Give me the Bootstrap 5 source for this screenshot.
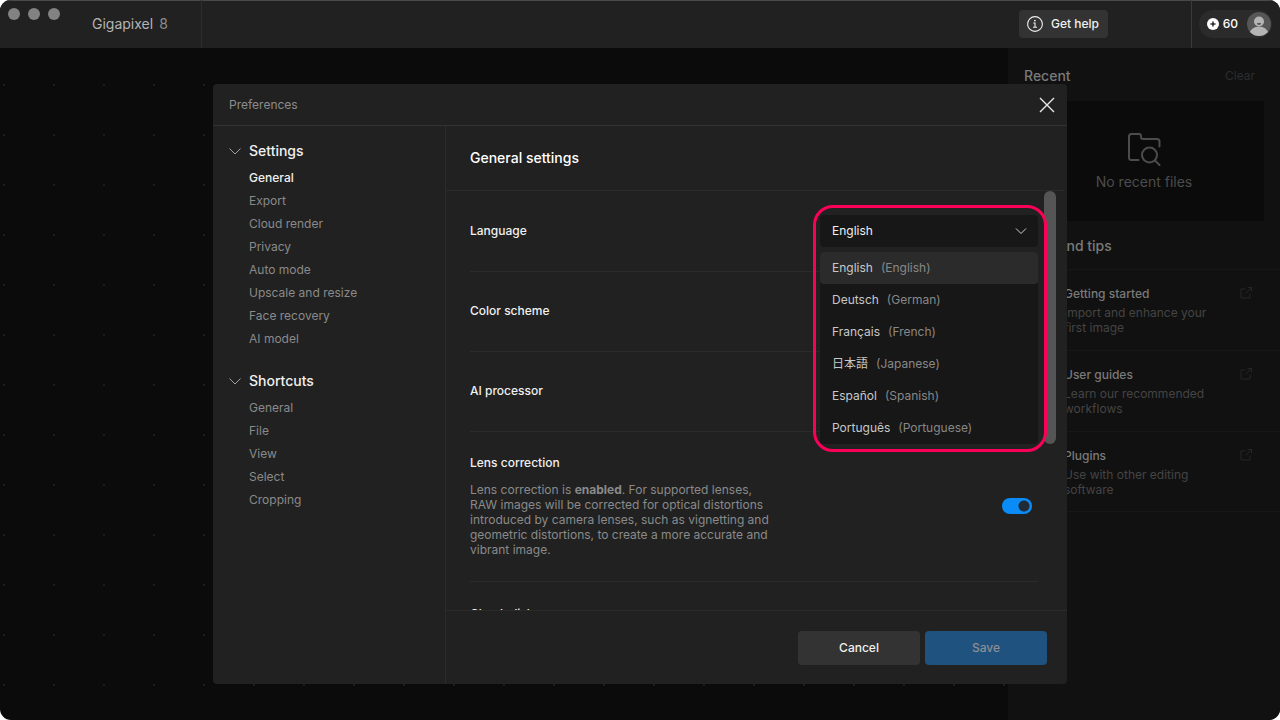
<!DOCTYPE html>
<html lang="en" data-bs-theme="dark">
<head>
<meta charset="utf-8">
<meta name="viewport" content="width=device-width, initial-scale=1">
<title>Gigapixel 8 – Preferences</title>
<link rel="stylesheet" href="https://cdn.jsdelivr.net/npm/bootstrap@5.3.0/dist/css/bootstrap.min.css">
<style>
  html { background: #fff; }
  body { background: #fff; font-family: Inter, "Noto Sans CJK JP", sans-serif; font-size: 12px; line-height: 18px; color: #f0f0f0; }
  a { text-decoration: none; color: inherit; }
  svg { display: block; flex: none; }
  .fs-14 { font-size: 14px; }
  .app-window { background: #0b0b0b; border-radius: 11px; }

  .titlebar { height: 48px; background: #212121; box-shadow: inset 0 1px #4a4a4a; }
  .brand-area { width: 202px; border-right: 1px solid #2e2e2e; }
  .lights { top: 8px; left: 8px; gap: 8px; }
  .lights span { width: 12px; height: 12px; border-radius: 50%; background: #828282; }
  .brand-name { padding-left: 92px; gap: 6px; color: #b4b4b4; }
  .brand-name span { color: #8c8c8c; }
  .help-btn { height: 28px; padding: 0 9px 0 8px; gap: 8px; margin-right: 83px; background: #333; border: 0; border-radius: 4px; color: #f0f0f0; font-weight: 500; }
  .account-area { width: 89px; padding-right: 8px; border-left: 1px solid #3a3a3a; }
  .account-btn { height: 28px; padding: 0 1px 0 8px; background: #2b2b2b; border: 0; border-radius: 14px; color: #fff; font-weight: 500; }
  .credits { margin: 0 9px 0 4px; }

  .canvas-area { background-image: radial-gradient(circle at 4px 37px, #242424 0, #191919 1px, transparent 1px); background-size: 50px 50px; }
  .side-panel { width: 272px; background: #111; padding: 18px 0 0 16px; }
  .side-panel h2 { font-size: 14px; line-height: 20px; margin: 0; color: #7a7a7a; font-weight: 500; }
  .clear-btn { border: 0; background: none; padding: 0; margin-right: 25px; color: #2d2d2d; }
  .empty-box { height: 120px; margin: 15px 16px 0 0; background: #0b0b0b; color: #4c4c4c; gap: 7px; }
  .tips-title { padding: 15px 0 13px; }
  .side-panel .tips-title { line-height: 20px; }
  .tip-item { min-height: 81px; border-top: 1px solid #171717; padding: 15px 28px 0 40px; color: #7a7a7a; font-weight: 500; }
  .tip-item:last-child { border-bottom: 1px solid #171717; }
  .tip-item p { margin: 2px 0 0; line-height: 15px; color: #444; font-weight: 400; }
  .tip-item svg { color: #262626; margin-top: 2px; }

  .overlay { inset: 0; }
  .prefs { width: 854px; max-width: 100%; height: calc(100% - 72px); background: #212121; border-radius: 4px; }
  .prefs-head { height: 42px; padding: 0 12px 0 16px; border-bottom: 1px solid #333; color: #8c8c8c; }
  .prefs-nav { width: 233px; border-right: 1px solid #2b2b2b; padding: 14px 16px; }
  .nav-head { border: 0; background: none; padding: 0; gap: 8px; height: 22px; font-size: 14px; font-weight: 500; color: #f0f0f0; }
  .nav-head svg { color: #a0a0a0; }
  .nav-links { margin: 4px 0 20px 20px; padding: 0; list-style: none; color: #8a8a8a; }
  .nav-links li { line-height: 23px; }
  .nav-links .current { color: #f0f0f0; font-weight: 500; }
  .pane-title { height: 65px; margin-right: 3px; padding-left: 24px; border-bottom: 1px solid #2b2b2b; }
  .pane-title h1 { font-size: 14px; font-weight: 500; margin: 0; }
  .pane-body { min-height: 0; padding: 1px 29px 0 24px; }
  .setting { height: 80px; padding-bottom: 2px; border-bottom: 1px solid #2b2b2b; flex: none; font-weight: 500; }
  .setting.tall { height: 150px; }
  .setting p { width: 304px; margin: 10px 0 0; line-height: 15px; font-weight: 400; color: #8a8a8a; }
  .setting b { font-weight: 700; }
  .setting-cut { padding-top: 23px; }
  .lang-field { width: 218px; }
  .lang-field select { height: 32px; padding: 0 12px; background: #171717; border: 0; border-radius: 4px; color: #f0f0f0; font-size: 12px; appearance: none; }
  .lang-field > svg { right: 10px; top: 9px; pointer-events: none; }
  .lang-menu { top: 37px; left: 0; right: 0; background: #171717; border-radius: 4px; margin: 0; padding: 0; list-style: none; z-index: 3; font-weight: 400; color: #c8c8c8; }
  .lang-menu li { height: 32px; padding: 0 12px; gap: 8px; border-radius: 4px; }
  .lang-menu li span { color: #888; }
  .lang-menu .active-lang { background: #2b2b2b; }
  .callout-ring { inset: -10px -9px -205px -7px; border: 3px solid #fb0058; border-radius: 20px; z-index: 4; pointer-events: none; }
  .scroll-thumb { top: 0; right: 11px; width: 12px; height: 253px; border-radius: 6px; background: #555; }
  .form-check-input.lens-switch { width: 30px; height: 16px; margin: 0 6px 0 0; border: 0; border-radius: 8px; appearance: none; background: radial-gradient(circle at 22px 8px, #212b36 5px, #0a8bf5 6px); }
  .prefs-foot { height: 74px; padding: 0 20px; gap: 5px; border-top: 1px solid #2b2b2b; }
  .prefs-foot .btn { width: 122px; height: 34px; padding: 0; border: 0; border-radius: 4px; font-size: 12px; font-weight: 500; background: #333; color: #f0f0f0; }
  .prefs-foot .save-btn:disabled { background: #20527f; color: #8c8f94; opacity: 1; }
</style>
</head>
<body>
<div class="app-window vh-100 d-flex flex-column overflow-hidden">
  <header class="titlebar d-flex flex-shrink-0">
    <div class="brand-area position-relative d-flex align-items-center">
      <div class="lights position-absolute d-flex"><span></span><span></span><span></span></div>
      <div class="brand-name d-flex fs-14">Gigapixel <span>8</span></div>
    </div>
    <div class="flex-grow-1 d-flex align-items-center justify-content-end">
      <button type="button" class="help-btn d-flex align-items-center">
        <svg width="16" height="16" viewBox="0 0 16 16" fill="none" stroke="currentColor"><circle cx="8" cy="8" r="7.4" stroke-width="1.1"/><path d="M6.3 7H8v4.2M6 11.3h4" stroke-width="1.1"/><circle cx="7.9" cy="4.6" r=".9" fill="currentColor" stroke="none"/></svg>
        Get help
      </button>
    </div>
    <div class="account-area d-flex align-items-center justify-content-end">
      <button type="button" class="account-btn d-flex align-items-center">
        <svg width="12" height="12" viewBox="0 0 12 12"><circle cx="6" cy="6" r="6" fill="#fff"/><path d="M6 3l.8 2.2L9 6l-2.2.8L6 9l-.8-2.2L3 6l2.2-.8z" fill="#222" stroke="#222" stroke-width=".3"/></svg>
        <span class="credits">60</span>
        <svg width="24" height="24" viewBox="0 0 24 24"><defs><clipPath id="face"><circle cx="12" cy="12" r="12"/></clipPath></defs><g clip-path="url(#face)"><path fill="#565656" d="M0 0h24v24H0z"/><circle cx="12" cy="9.500" r="5" fill="#b4b4b4"/><ellipse cx="12" cy="21" rx="9" ry="6.500" fill="#b4b4b4"/><path d="M10 11h4a2 2 0 0 1-4 0z" fill="#565656"/></g></svg>
      </button>
    </div>
  </header>

  <div class="position-relative flex-grow-1 d-flex overflow-hidden">
    <main class="canvas-area flex-grow-1"></main>
    <aside class="side-panel flex-shrink-0">
      <div class="d-flex justify-content-between align-items-center">
        <h2>Recent</h2>
        <button type="button" class="clear-btn">Clear</button>
      </div>
      <div class="empty-box d-flex flex-column align-items-center justify-content-center">
        <svg width="34" height="34" viewBox="0 0 34 34" fill="none" stroke="currentColor" stroke-width="2" stroke-linecap="round" stroke-linejoin="round"><path d="M11.500 28H4.500a2.500 2.500 0 0 1-2.500-2.500v-21A2.500 2.500 0 0 1 4.500 2h7.500a2 2 0 0 1 2 2v1a2 2 0 0 0 2 2h14a2.500 2.500 0 0 1 2.500 2.500V14.500"/><circle cx="22.500" cy="23" r="7.500"/><path d="M28 28.500l4.500 4.500"/></svg>
        <span class="fs-14">No recent files</span>
      </div>
      <h2 class="tips-title">Help and tips</h2>
      <div>
        <a href="#" class="tip-item d-flex justify-content-between"><div>Getting started<p>Import and enhance your<br>first image</p></div><svg width="12" height="12" viewBox="0 0 12 12" fill="none" stroke="currentColor"><path d="M5.500 2H1v9h9V6.500M7.500.5h4v4M11.500.5L5.500 6.500"/></svg></a>
        <a href="#" class="tip-item d-flex justify-content-between"><div>User guides<p>Learn our recommended<br>workflows</p></div><svg width="12" height="12" viewBox="0 0 12 12" fill="none" stroke="currentColor"><path d="M5.500 2H1v9h9V6.500M7.500.5h4v4M11.500.5L5.500 6.500"/></svg></a>
        <a href="#" class="tip-item d-flex justify-content-between"><div>Plugins<p>Use with other editing<br>software</p></div><svg width="12" height="12" viewBox="0 0 12 12" fill="none" stroke="currentColor"><path d="M5.500 2H1v9h9V6.500M7.500.5h4v4M11.500.5L5.500 6.500"/></svg></a>
      </div>
    </aside>

    <div class="overlay position-absolute d-flex align-items-center justify-content-center">
      <section class="prefs d-flex flex-column overflow-hidden" role="dialog" aria-labelledby="prefs-title">
        <div class="prefs-head d-flex align-items-center justify-content-between flex-shrink-0">
          <span id="prefs-title">Preferences</span>
          <button type="button" class="border-0 bg-transparent p-0 text-white" aria-label="Close"><svg width="16" height="16" viewBox="0 0 16 16" fill="none" stroke="#e8e8e8" stroke-width="1.4"><path d="M1 1l14 14M15 1L1 15"/></svg></button>
        </div>
        <div class="d-flex flex-grow-1 overflow-hidden">
          <nav class="prefs-nav flex-shrink-0">
            <button type="button" class="nav-head d-flex align-items-center"><svg width="12" height="12" viewBox="0 0 12 12" fill="none" stroke="currentColor"><path d="M.5 3.500L6 9l5.500-5.500"/></svg>Settings</button>
            <ul class="nav-links">
              <li><a href="#" class="current">General</a></li>
              <li><a href="#">Export</a></li>
              <li><a href="#">Cloud render</a></li>
              <li><a href="#">Privacy</a></li>
              <li><a href="#">Auto mode</a></li>
              <li><a href="#">Upscale and resize</a></li>
              <li><a href="#">Face recovery</a></li>
              <li><a href="#">AI model</a></li>
            </ul>
            <button type="button" class="nav-head d-flex align-items-center"><svg width="12" height="12" viewBox="0 0 12 12" fill="none" stroke="currentColor"><path d="M.5 3.500L6 9l5.500-5.500"/></svg>Shortcuts</button>
            <ul class="nav-links">
              <li><a href="#">General</a></li>
              <li><a href="#">File</a></li>
              <li><a href="#">View</a></li>
              <li><a href="#">Select</a></li>
              <li><a href="#">Cropping</a></li>
            </ul>
          </nav>
          <div class="flex-grow-1 d-flex flex-column overflow-hidden">
            <div class="pane-title d-flex align-items-center flex-shrink-0"><h1>General settings</h1></div>
            <div class="pane-body position-relative flex-grow-1 d-flex flex-column overflow-hidden">
              <div class="scroll-thumb position-absolute"></div>
              <div class="setting d-flex align-items-center justify-content-between">
                <label for="language">Language</label>
                <div class="lang-field position-relative">
                  <select id="language" class="w-100 d-block"><option>English</option><option>Deutsch</option><option>Français</option><option>日本語</option><option>Español</option><option>Português</option></select>
                  <svg class="position-absolute" width="14" height="14" viewBox="0 0 14 14" fill="none" stroke="#d0d0d0"><path d="M2 4.500l5 5 5-5"/></svg>
                  <ul class="lang-menu position-absolute">
                    <li class="active-lang d-flex align-items-center">English <span>(English)</span></li>
                    <li class="d-flex align-items-center">Deutsch <span>(German)</span></li>
                    <li class="d-flex align-items-center">Français <span>(French)</span></li>
                    <li class="d-flex align-items-center">日本語 <span>(Japanese)</span></li>
                    <li class="d-flex align-items-center">Español <span>(Spanish)</span></li>
                    <li class="d-flex align-items-center">Português <span>(Portuguese)</span></li>
                  </ul>
                  <div class="callout-ring position-absolute"></div>
                </div>
              </div>
              <div class="setting d-flex align-items-center">Color scheme</div>
              <div class="setting d-flex align-items-center">AI processor</div>
              <div class="setting tall d-flex align-items-center justify-content-between">
                <div><label for="lens">Lens correction</label>
                  <p>Lens correction is <b>enabled</b>. For supported lenses, RAW images will be corrected for optical distortions introduced by camera lenses, such as vignetting and geometric distortions, to create a more accurate and vibrant image.</p></div>
                <input type="checkbox" role="switch" id="lens" class="form-check-input lens-switch" checked>
              </div>
              <div class="setting setting-cut">Check disk</div>
            </div>
            <div class="prefs-foot d-flex align-items-center justify-content-end flex-shrink-0">
              <button type="button" class="btn">Cancel</button>
              <button type="button" class="btn save-btn" disabled>Save</button>
            </div>
          </div>
        </div>
      </section>
    </div>
  </div>
</div>
<script src="https://cdn.jsdelivr.net/npm/bootstrap@5.3.0/dist/js/bootstrap.bundle.min.js"></script>
</body>
</html>
